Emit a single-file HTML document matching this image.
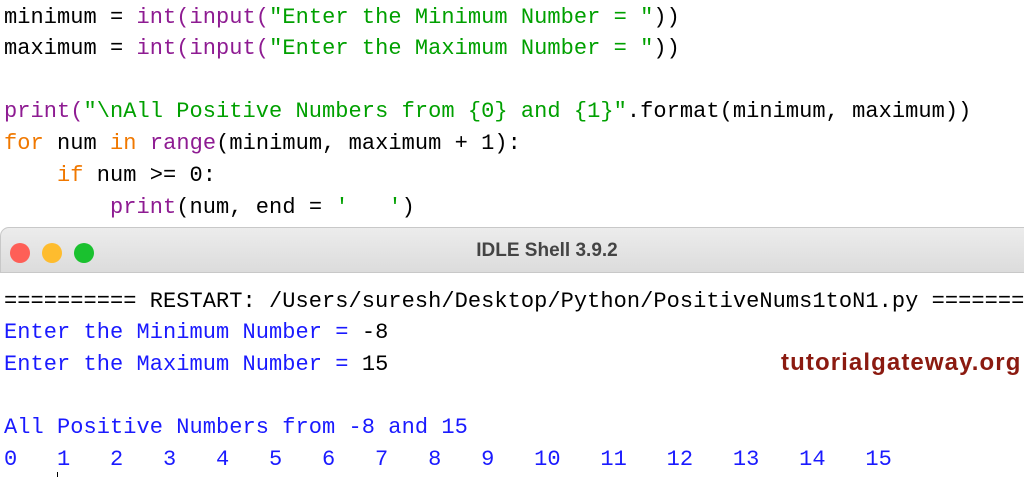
<!DOCTYPE html>
<html><head><style>
body{margin:0;width:1024px;height:477px;overflow:hidden;background:#fff;position:relative;font-family:"Liberation Mono",monospace;font-size:22px}
.l{position:absolute;left:4px;white-space:pre;line-height:26px;letter-spacing:0.05px}
.p{color:#8e1b92}.g{color:#00a000}.o{color:#f07800}.b{color:#1a1aff}.k{color:#000}
#bar{position:absolute;left:0;top:227px;width:1040px;height:46px;border:1px solid #c8c8c8;border-radius:9px 9px 0 0;background:linear-gradient(#ececec,#dcdcdc);box-sizing:border-box}
.d{position:absolute;top:243px;width:20px;height:20px;border-radius:50%}
#t{position:absolute;left:0;width:1094px;top:240px;text-align:center;font-family:"Liberation Sans",sans-serif;font-weight:bold;font-size:19px;color:#444}
#w{position:absolute;left:781px;top:349px;font-family:"Liberation Sans",sans-serif;font-weight:bold;font-size:24px;color:#8b1a10;letter-spacing:1.1px}
</style></head><body>
<div class="l" style="top:5px">minimum = <span class="p">int(input(</span><span class="g">"Enter the Minimum Number = "</span>))</div>
<div class="l" style="top:36px">maximum = <span class="p">int(input(</span><span class="g">"Enter the Maximum Number = "</span>))</div>
<div class="l" style="top:99px"><span class="p">print(</span><span class="g">"\nAll Positive Numbers from {0} and {1}"</span>.format(minimum, maximum))</div>
<div class="l" style="top:131px"><span class="o">for</span> num <span class="o">in</span> <span class="p">range</span>(minimum, maximum + 1):</div>
<div class="l" style="top:163px">    <span class="o">if</span> num &gt;= 0:</div>
<div class="l" style="top:195px">        <span class="p">print</span>(num, end = <span class="g">'   '</span>)</div>
<div id="bar"></div>
<div class="d" style="left:10px;background:#fe5f57"></div>
<div class="d" style="left:42px;background:#febc2e"></div>
<div class="d" style="left:74px;background:#1ac12f"></div>
<div id="t">IDLE Shell 3.9.2</div>
<div class="l" style="top:289px">========== RESTART: /Users/suresh/Desktop/Python/PositiveNums1toN1.py ==========</div>
<div class="l" style="top:320px"><span class="b">Enter the Minimum Number = </span>-8</div>
<div class="l" style="top:352px"><span class="b">Enter the Maximum Number = </span>15</div>
<div class="l b" style="top:415px">All Positive Numbers from -8 and 15</div>
<div class="l b" style="top:447px">0   1   2   3   4   5   6   7   8   9   10   11   12   13   14   15</div>
<div style="position:absolute;left:57px;top:472px;width:1px;height:5px;background:#000"></div>
<div id="w">tutorialgateway.org</div>
</body></html>
